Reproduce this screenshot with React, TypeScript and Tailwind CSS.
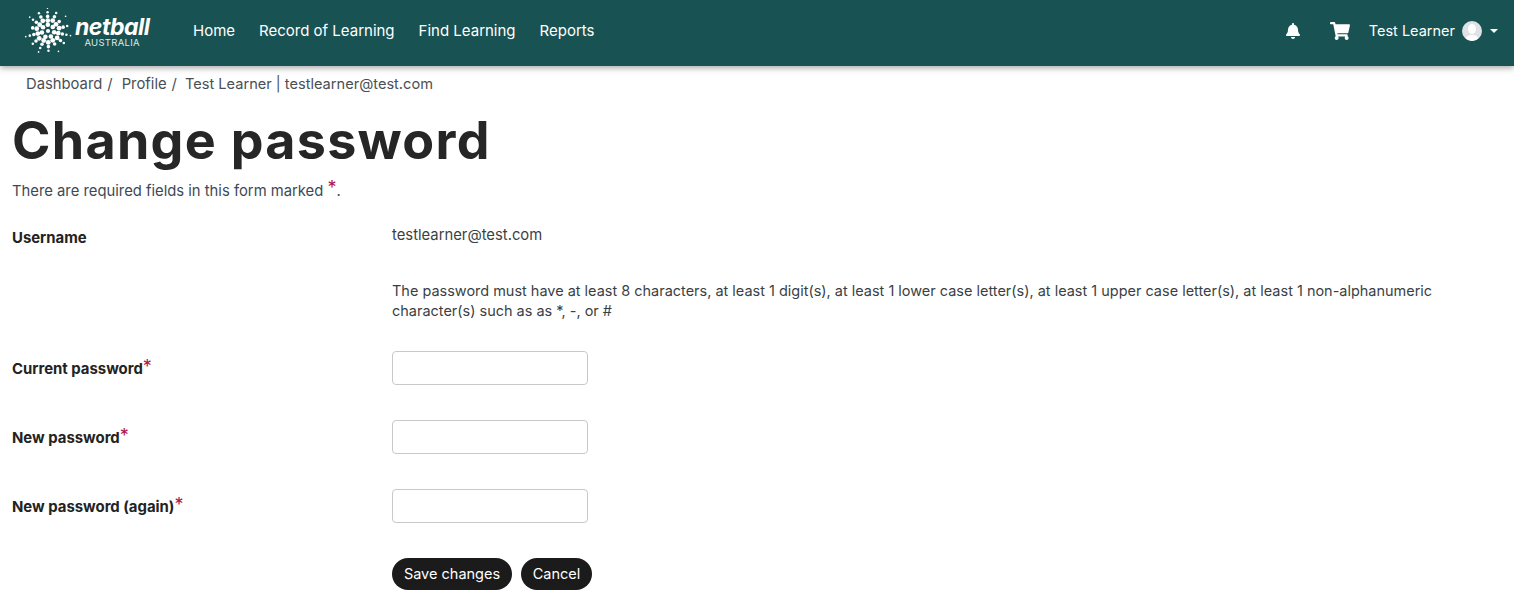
const font = "font-['Inter','Liberation_Sans',sans-serif]";

// logo burst: rays of dots, shrinking towards the rim
const radii = [6, 10, 14, 18, 22];
const sizes = [2.2, 2.3, 1.7, 1.2, 0.8];

function LogoBurst() {
  const dots = [];
  for (let ray = 0; ray < 14; ray++) {
    const a = (ray / 14) * Math.PI * 2 + 0.2;
    radii.forEach((r, i) => {
      // alternate rays drop the inner and outer dots so the burst looks uneven
      if (ray % 2 === 1 && (i === 0 || i === 4)) return;
      if (ray % 5 === 2 && i === 3) return;
      const rr = r + (ray % 2 ? 1 : 0);
      dots.push(
        <circle key={`${ray}-${i}`} cx={rr * Math.cos(a)} cy={rr * Math.sin(a)} r={sizes[i]} fill="#fff" />
      );
    });
  }
  return (
    <svg width="48" height="46" viewBox="-23 -22 46 44" className="shrink-0">
      <circle cx="0" cy="0" r="2" fill="#fff" />
      {dots}
    </svg>
  );
}

function Logo() {
  return (
    <div className="flex w-[128px] items-center">
      <LogoBurst />
      <div className="ml-[3px] flex flex-col items-center pt-[3px]">
        <span className="text-[23px] leading-[19px] font-bold italic tracking-[-0.5px] text-white">
          netball
        </span>
        <span className="mt-[1px] text-[9.500px] leading-[9px] tracking-[0.3px] text-[#dfe9e9]">AUSTRALIA</span>
      </div>
    </div>
  );
}

function Star() {
  return (
    <span className="relative -top-[2px] text-[18px] leading-none font-normal text-[#b5123e]">*</span>
  );
}

function FieldRow({ label, className }: { label: string; className: string }) {
  return (
    <div className={`grid grid-cols-[380px_196px] ${className}`}>
      <label className="flex items-center pt-[2px] text-[14.900px] font-bold text-[#232323]">
        {label}
        <Star />
      </label>
      <input
        type="password"
        className="h-[34px] rounded-[4px] border border-[#c9c9c9] bg-white"
      />
    </div>
  );
}

export default function App() {
  const navItems = ["Home", "Record of Learning", "Find Learning", "Reports"];
  return (
    <div className={`h-[615px] overflow-hidden bg-white ${font}`}>
      <header className="relative flex h-[66px] items-center justify-between bg-[#195252] pb-[4px] pl-[24px] pr-[16px] shadow-[0_2px_6px_rgba(0,0,0,0.35)]">
        <div className="flex items-center">
          <Logo />
          <nav className="ml-[41px] flex gap-[24px] text-[15px] text-white">
            {navItems.map((n) => (
              <a key={n}>{n}</a>
            ))}
          </nav>
        </div>
        <div className="flex items-center text-white">
          <svg width="14" height="16" viewBox="0 0 448 512" fill="currentColor">
            <path d="M224 512c35.3 0 64-28.7 64-64H160c0 35.300 28.700 64 64 64zm215.400-149.700c-19.300-20.800-55.500-52-55.500-154.300 0-77.700-54.500-139.900-127.900-155.200V32c0-17.700-14.300-32-32-32s-32 14.300-32 32v20.800C118.600 68.100 64.100 130.300 64.100 208c0 102.300-36.200 133.500-55.500 154.300-6 6.400-8.700 14.100-8.600 21.700.1 16.400 13 32 32.100 32h383.800c19.100 0 32-15.600 32.100-32 .1-7.600-2.600-15.300-8.600-21.700z" />
          </svg>
          <svg className="ml-[30px]" width="20" height="18" viewBox="0 0 576 512" fill="currentColor">
            <path d="M528.100 301.300l47.300-208C578.800 78.300 567.400 64 552 64H159.200l-9.200-44.800C147.800 8 137.900 0 126.500 0H24C10.700 0 0 10.700 0 24v16c0 13.300 10.700 24 24 24h69.900l70.200 343.400C147.300 417.100 136 435.200 136 456c0 30.900 25.100 56 56 56s56-25.100 56-56c0-15.700-6.400-29.800-16.800-40h209.600C430.400 426.200 424 440.300 424 456c0 30.900 25.100 56 56 56s56-25.100 56-56c0-22.200-12.900-41.300-31.600-50.400l5.500-24.300c3.400-15-8-29.300-23.400-29.300H218.100l-6.500-32h293.100c11.200 0 20.900-7.800 23.400-18.700z" />
          </svg>
          <span className="ml-[19px] text-[14.500px]">Test Learner</span>
          <span className="ml-[7px] flex h-[20px] w-[20px] items-end justify-center overflow-hidden rounded-full bg-[#dfe3e6]">
            <svg width="14" height="18" viewBox="0 0 14 18" fill="#fff">
              <ellipse cx="7" cy="6" rx="4" ry="5" />
              <path d="M0 18c0-4 3-6 7-6s7 2 7 6z" />
            </svg>
          </span>
          <span className="ml-[8px] h-0 w-0 border-x-[4px] border-t-[4px] border-x-transparent border-t-white" />
        </div>
      </header>

      <div className="ml-[26px] mt-[8px] flex h-[20px] items-center text-[14.800px] text-[#4a4f55]">
        <span>Dashboard</span>
        <span className="ml-[5px]">/</span>
        <span className="ml-[9px]">Profile</span>
        <span className="ml-[5px]">/</span>
        <span className="ml-[8px] mt-[2px] text-[14.600px]">Test Learner | testlearner@test.com</span>
      </div>

      <main className="px-[12px]">
        <h1 className="mt-[17px] text-[52px] leading-[60px] font-bold tracking-[1.3px] text-[#262626]">
          Change password
        </h1>
        <p className="mt-[10px] h-[20px] text-[14.800px] leading-[20px] text-[#3d4a55]">
          There are required fields in this form marked <Star />.
        </p>

        <div className="mt-[23px] grid grid-cols-[380px_1fr] text-[14.800px] text-[#3a3f44]">
          <span className="pt-[4px] text-[14.900px] leading-[20px] font-bold text-[#232323]">Username</span>
          <span className="pt-[1px] leading-[20px]">testlearner@test.com</span>
        </div>

        <div className="mt-[33px] pl-[380px] pr-[60px] text-[14.470px] leading-[20px] text-[#3a3f44]">
          The password must have at least 8 characters, at least 1 digit(s), at least 1 lower case letter(s), at least 1 upper case letter(s), at least 1 non-alphanumeric character(s) such as as *, -, or #
        </div>

        <FieldRow label="Current password" className="mt-[30px]" />
        <FieldRow label="New password" className="mt-[35px]" />
        <FieldRow label="New password (again)" className="mt-[35px]" />

        <div className="mt-[35px] flex gap-[9px] pl-[380px]">
          <button className="h-[32px] w-[120px] rounded-full bg-[#1b1b1b] text-[14.500px] text-white">Save changes</button>
          <button className="h-[32px] w-[71px] rounded-full bg-[#1b1b1b] text-[14.500px] text-white">Cancel</button>
        </div>
      </main>
    </div>
  );
}
